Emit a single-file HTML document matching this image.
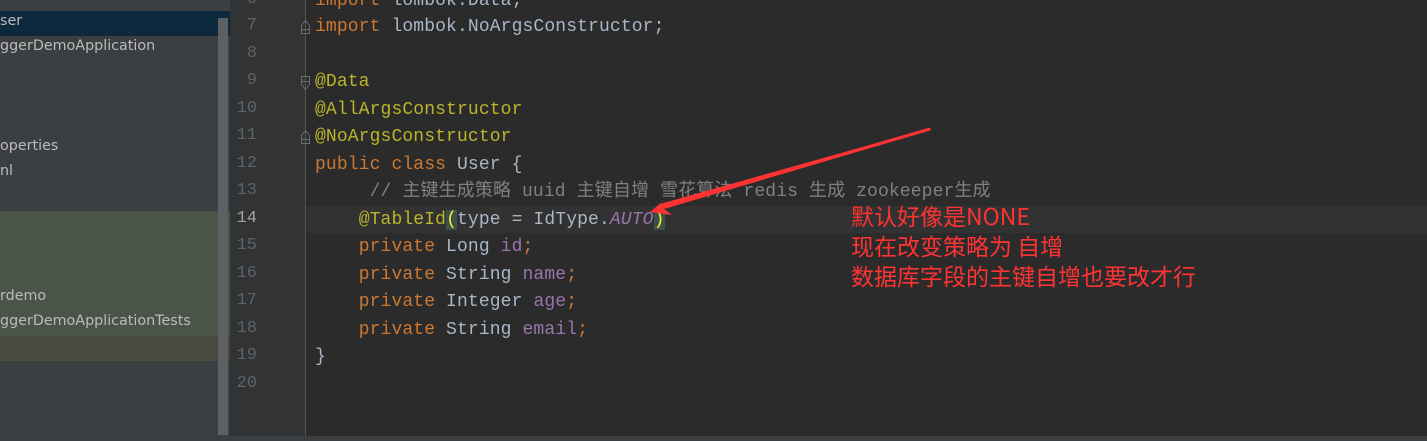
<!DOCTYPE html>
<html><head><meta charset="utf-8"><style>
html,body{margin:0;padding:0}
body{width:1427px;height:441px;background:#2b2b2b;position:relative;overflow:hidden;font-family:"Liberation Mono","Noto Sans CJK SC",monospace}
.l{position:absolute;left:0;top:0;width:230px;height:441px;background:#3c3f41}
.r{position:absolute;left:0;width:230px;height:25px}
.t{position:absolute;left:0;font:14.3px "DejaVu Sans",sans-serif;color:#bbbbbb;white-space:nowrap}
.g{position:absolute;left:230px;top:0;width:75px;height:436px;background:#313335;border-right:1px solid #555}
.n{position:absolute;right:48px;font-size:17px;color:#606366;text-align:right;width:40px}
.c{position:absolute;left:315px;font-size:18px;letter-spacing:0.12px;white-space:pre;color:#a9b7c6;line-height:20px}
.k{color:#cc7832}.a{color:#bbb529}.f{color:#9876aa}.cm{color:#808080}
.red{position:absolute;left:851px;color:#ff3333;font:23px "Noto Sans CJK SC",sans-serif;white-space:nowrap}
</style></head><body>
<div class="l">
<div class="r" style="top:11px;background:#0d293e"></div>
<div class="r" style="top:211px;height:125px;background:#4a5449"></div>
<div class="r" style="top:336px;height:25px;background:#4b4a3f"></div>
<div style="position:absolute;left:218px;top:18px;width:10px;height:417px;background:#5e6163"></div>
<div class="t" style="top:13px">ser</div>
<div class="t" style="top:38px">ggerDemoApplication</div>
<div class="t" style="top:138px">operties</div>
<div class="t" style="top:163px">nl</div>
<div class="t" style="top:288px">rdemo</div>
<div class="t" style="top:313px">ggerDemoApplicationTests</div>
</div>
<div style="position:absolute;left:305px;top:206px;width:1122px;height:27px;background:#323232"></div>
<div class="g">
<div class="n" style="top:-10px">6</div>
<div class="n" style="top:16px">7</div>
<div class="n" style="top:44px">8</div>
<div class="n" style="top:71px">9</div>
<div class="n" style="top:99px">10</div>
<div class="n" style="top:126px">11</div>
<div class="n" style="top:154px">12</div>
<div class="n" style="top:181px">13</div>
<div class="n" style="top:209px;color:#a4a3a3">14</div>
<div class="n" style="top:236px">15</div>
<div class="n" style="top:264px">16</div>
<div class="n" style="top:291px">17</div>
<div class="n" style="top:319px">18</div>
<div class="n" style="top:346px">19</div>
<div class="n" style="top:374px">20</div>
</div>
<svg style="position:absolute;left:0;top:0" width="1427" height="441">
<g fill="none" stroke="#6a6d70" stroke-width="1">
<path d="M301.5,33.5 v-8 l4,-5 l4,5 v8 z M302,29.5 h7"/>
<path d="M301.5,76.5 v8 l4,5 l4,-5 v-8 z M302,81.5 h7"/>
<path d="M301.5,143.5 v-8 l4,-5 l4,5 v8 z M302,139.5 h7"/>
</g>
</svg>
<div style="position:absolute;left:0;top:436px;width:1427px;height:5px;background:#3c3f41"></div>
<div class="c" style="top:-9px"><span class="k">import</span> lombok.Data;</div>
<div class="c" style="top:17px"><span class="k">import</span> lombok.NoArgsConstructor;</div>
<div class="c a" style="top:72px">@Data</div>
<div class="c a" style="top:100px">@AllArgsConstructor</div>
<div class="c a" style="top:127px">@NoArgsConstructor</div>
<div class="c" style="top:155px"><span class="k">public class</span> User {</div>
<div class="c cm" style="top:182px">     // 主键生成策略 uuid 主键自增 雪花算法 redis 生成 zookeeper生成</div>
<div class="c" style="top:210px">    <span class="a">@TableId</span><span style="background:#3b514d;color:#ffef28">(</span>type = IdType.<i class="f">AUTO</i><span style="background:#3b514d;color:#ffef28">)</span></div>
<div class="c" style="top:237px">    <span class="k">private</span> Long <span class="f">id</span><span class="k">;</span></div>
<div class="c" style="top:265px">    <span class="k">private</span> String <span class="f">name</span><span class="k">;</span></div>
<div class="c" style="top:292px">    <span class="k">private</span> Integer <span class="f">age</span><span class="k">;</span></div>
<div class="c" style="top:320px">    <span class="k">private</span> String <span class="f">email</span><span class="k">;</span></div>
<div class="c" style="top:347px">}</div>
<svg style="position:absolute;left:0;top:0" width="1427" height="441">
<polygon points="930,128 660,204 668,197 650,212 672,215 664,209 931,130" fill="#ff3333"/>
<line x1="930" y1="129" x2="662" y2="207" stroke="#ff3333" stroke-width="3"/>
</svg>
<div class="red" style="top:198px">默认好像是NONE</div>
<div class="red" style="top:228px">现在改变策略为 自增</div>
<div class="red" style="top:258px">数据库字段的主键自增也要改才行</div>
</body></html>
